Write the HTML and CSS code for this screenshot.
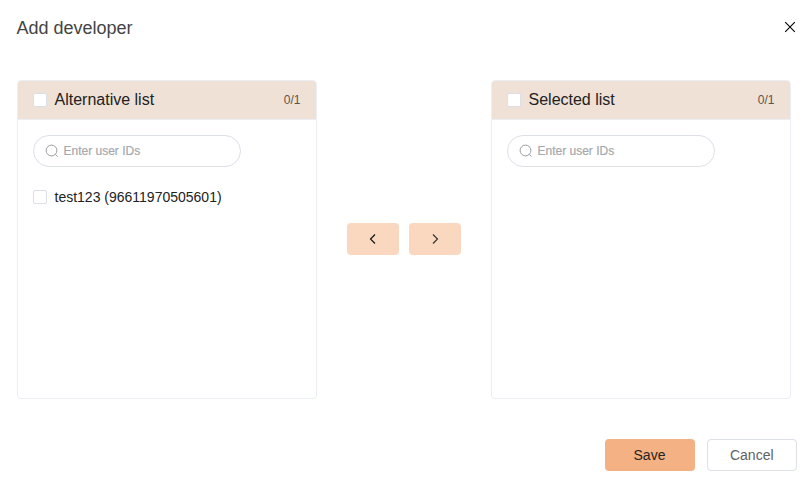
FILE: index.html
```html
<!DOCTYPE html>
<html lang="en">
<head>
<meta charset="utf-8">
<title>Add developer</title>
<link rel="stylesheet" href="styles.css">
</head>
<body>
<main class="dialog">
  <header class="dialog-header">
    <h1 class="title">Add developer</h1>
    <svg class="close" viewBox="0 0 12 12"><path d="M1.200 1.200l9.600 9.600M10.800 1.200L1.200 10.800"/></svg>
  </header>
  <div class="transfer">
    <section class="panel">
      <div class="panel-header"><span class="checkbox"></span><span class="panel-title">Alternative list</span><span class="count">0/1</span></div>
      <div class="search"><svg class="search-icon" viewBox="0 0 14 14"><circle cx="6.500" cy="6.500" r="5.400"/><path d="M10.400 10.400l2.200 2.200"/></svg><span>Enter user IDs</span></div>
      <div class="item"><span class="checkbox"></span><span>test123 (96611970505601)</span></div>
    </section>
    <div class="arrows">
      <button class="arrow"><svg viewBox="0 0 14 14"><path d="M9 2.500L4.500 7L9 11.500"/></svg></button>
      <button class="arrow"><svg class="next" viewBox="0 0 14 14"><path d="M5 2.500L9.500 7L5 11.500"/></svg></button>
    </div>
    <section class="panel">
      <div class="panel-header"><span class="checkbox"></span><span class="panel-title">Selected list</span><span class="count">0/1</span></div>
      <div class="search"><svg class="search-icon" viewBox="0 0 14 14"><circle cx="6.500" cy="6.500" r="5.400"/><path d="M10.400 10.400l2.200 2.200"/></svg><span>Enter user IDs</span></div>
    </section>
  </div>
  <footer class="actions">
    <button class="button save">Save</button>
    <button class="button cancel">Cancel</button>
  </footer>
</main>
</body>
</html>
```
FILE: styles.css
```css
* { box-sizing: border-box; }
body { margin: 0; background: #fff; font-family: "Liberation Sans", Arial, sans-serif; color: #222; }
button { font: inherit; padding: 0; }
svg { fill: none; stroke: currentColor; display: block; }
.dialog { width: 812px; height: 483px; padding: 16px 15px 12px 17px; display: flex; flex-direction: column; }
.dialog-header { height: 24px; display: flex; align-items: center; justify-content: space-between; }
.title { margin: 0 0 0 -0.5px; font-size: 18px; font-weight: 400; line-height: 24px; color: #444; }
.close { width: 12px; height: 12px; margin: 0 1px 2px 0; stroke: #000; stroke-width: 1.1; }
.transfer { display: flex; margin-top: 40px; height: 319px; }
.panel { width: 300px; border: 1px solid #ebeef5; border-radius: 4px; overflow: hidden; }
.panel-header { display: flex; align-items: center; height: 39px; padding: 0 15.5px 0 15px; background: #efe1d6; border-bottom: 1px solid #ebeef5; }
.checkbox { width: 14px; height: 14px; background: #fff; border: 1px solid #dcdfe6; border-radius: 2px; margin-right: 7.5px; flex: none; }
.panel-title { font-size: 16px; }
.count { margin-left: auto; font-size: 12px; color: #5c544f; }
.search { display: flex; align-items: center; width: 208px; height: 32px; margin: 15px 15px 0; padding-left: 11px; border: 1px solid #dcdfe6; border-radius: 16px; font-size: 12px; color: #a6a8ad; -webkit-text-stroke: 0.2px #a6a8ad; }
.search-icon { width: 14px; height: 14px; margin-right: 4.5px; stroke: #999ba0; }
.item { display: flex; align-items: center; height: 30px; margin: 15px 15px 0; font-size: 14px; }
.arrows { display: flex; align-items: center; gap: 10px; margin: 0 30px; padding-bottom: 2px; }
.arrow { width: 52px; height: 32px; border: 0; border-radius: 4px; background: #f9d8bf; display: flex; align-items: center; justify-content: center; }
.arrow svg { width: 14px; height: 14px; stroke: #111; stroke-width: 1.15; }
.arrow .next { stroke: #333; }
.actions { display: flex; justify-content: flex-end; gap: 12px; margin-top: auto; }
.button { width: 90px; height: 32px; border-radius: 4px; font-size: 14px; }
.save { border: 0; background: #f4b183; color: #282420; padding-right: 1px; }
.cancel { border: 1px solid #dcdfe6; background: #fff; color: #606266; padding-right: 0.5px; }
```
